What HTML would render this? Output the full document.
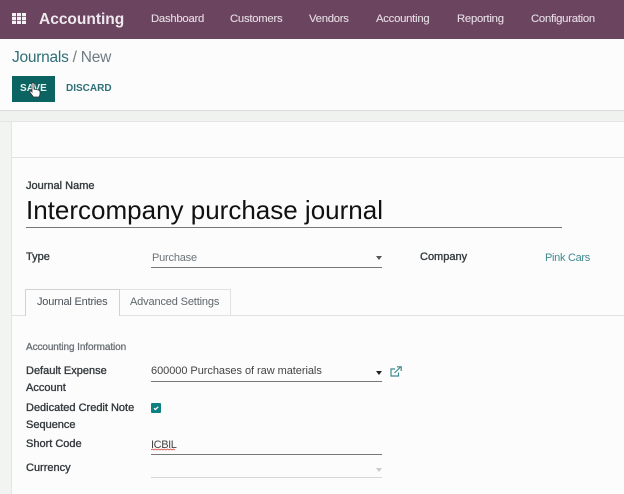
<!DOCTYPE html>
<html><head><meta charset="utf-8"><style>
html,body{margin:0;padding:0}
body{width:624px;height:494px;overflow:hidden;position:relative;background:#fbfcfb;font-family:"Liberation Sans",sans-serif;font-size:12px;color:#4c4c4c}
.a{position:absolute;white-space:nowrap;line-height:14px}
.l{position:absolute}
.b{color:#33393d;font-size:11px;-webkit-text-stroke:.35px #33393d}
.n{color:#e6dce3;font-size:11.3px;letter-spacing:-.25px;top:12px;-webkit-text-stroke:.1px #e6dce3}
.f{color:#444;font-size:11px;letter-spacing:-.05px}
.t{font-size:11px;letter-spacing:-.2px}
</style></head><body>
<div class="l" style="left:0;top:0;width:624px;height:39px;background:#6b4560"></div>
<svg class="l" style="left:12px;top:13px" width="14" height="11" viewBox="0 0 14 11"><g fill="#f5f0f4"><rect x="0" y="0" width="4" height="3.200"/><rect x="5" y="0" width="4" height="3.200"/><rect x="10" y="0" width="4" height="3.200"/><rect x="0" y="3.900" width="4" height="3.200"/><rect x="5" y="3.900" width="4" height="3.200"/><rect x="10" y="3.900" width="4" height="3.200"/><rect x="0" y="7.800" width="4" height="3.200"/><rect x="5" y="7.800" width="4" height="3.200"/><rect x="10" y="7.800" width="4" height="3.200"/></g></svg>
<div class="a" style="left:39px;top:10px;font-size:15.500px;line-height:19px;font-weight:bold;color:#efe9ee">Accounting</div>
<div class="a n" style="left:151px">Dashboard</div>
<div class="a n" style="left:230px">Customers</div>
<div class="a n" style="left:309px">Vendors</div>
<div class="a n" style="left:376px">Accounting</div>
<div class="a n" style="left:457px">Reporting</div>
<div class="a n" style="left:531px">Configuration</div>

<div class="a" style="left:12px;top:48px;font-size:15.500px;letter-spacing:-.25px;line-height:19px;color:#4f6f78"><span style="color:#2f6f78">Journals</span> <span style="color:#6f7c85">/ New</span></div>
<div class="l" style="left:12px;top:76px;width:43px;height:26px;background:#0b6461"></div>
<div class="a" style="left:20px;top:82px;font-size:10px;font-weight:bold;color:#e8f2f1;letter-spacing:.1px">SAVE</div>
<svg class="l" style="left:29px;top:82px" width="12" height="16" viewBox="0 0 12 16"><path d="M3 1.500c0-1.200 2-1.200 2 0V7l4.200 1c1.300.3 1.800 1 1.800 2.200v2.300L10 15H4.500L1 10.500c-.7-1.100.7-2.100 1.500-1.200l.5.700z" fill="#fff" stroke="#333" stroke-width=".8"/></svg>
<div class="a" style="left:66px;top:82px;font-size:10px;font-weight:bold;color:#2f6f78">DISCARD</div>

<div class="l" style="left:0;top:110px;width:624px;height:12px;background:#f0f2f0;border-top:1px solid #d8dbd9;border-bottom:1px solid #e3e6e4;box-sizing:border-box"></div>
<div class="l" style="left:0;top:122px;width:12px;height:372px;background:#f2f4f2;border-right:1px solid #e3e6e4;box-sizing:border-box"></div>
<div class="l" style="left:12px;top:157px;width:612px;height:1px;background:#e0e3e1"></div>

<div class="a b" style="left:26px;top:179px">Journal Name</div>
<div class="a" style="left:26px;top:193px;font-size:26px;line-height:34px;color:#111">Intercompany purchase journal</div>
<div class="l" style="left:26px;top:227px;width:536px;height:1px;background:#777"></div>

<div class="a b" style="left:26px;top:250px">Type</div>
<div class="a t" style="left:152px;top:251px;color:#6d747a">Purchase</div>
<div class="l" style="left:151px;top:267px;width:231px;height:1px;background:#777"></div>
<div class="l" style="left:376px;top:256px;width:0;height:0;border:3.500px solid transparent;border-top:4px solid #555;border-bottom:0"></div>
<div class="a b" style="left:420px;top:250px">Company</div>
<div class="a t" style="left:545px;top:251px;color:#3f8a90;letter-spacing:-.3px">Pink Cars</div>

<div class="l" style="left:12px;top:315px;width:612px;height:1px;background:#e0e3e1"></div>
<div class="l" style="left:25px;top:289px;width:95px;height:27px;background:#fbfcfb;border:1px solid #d0d3d1;border-bottom:0;box-sizing:border-box"></div>
<div class="l" style="left:120px;top:289px;width:111px;height:26px;border:1px solid #e0e3e1;border-left:0;border-bottom:0;box-sizing:border-box"></div>
<div class="a t" style="left:37px;top:295px;color:#4a5157">Journal Entries</div>
<div class="a t" style="left:130px;top:295px;color:#5f666c;letter-spacing:-.15px">Advanced Settings</div>

<div class="a" style="left:26px;top:341px;font-size:10px;letter-spacing:-.1px;color:#6a7075;-webkit-text-stroke:.3px #6a7075">Accounting Information</div>
<div class="a b" style="left:26px;top:363px;line-height:17px">Default Expense<br>Account</div>
<div class="a f" style="left:151px;top:364px">600000 Purchases of raw materials</div>
<div class="l" style="left:151px;top:381px;width:231px;height:1px;background:#777"></div>
<div class="l" style="left:376px;top:371px;width:0;height:0;border:3.500px solid transparent;border-top:4px solid #222;border-bottom:0"></div>
<svg class="l" style="left:390px;top:366px" width="12" height="11" viewBox="0 0 12 11" fill="none" stroke="#3f8a90" stroke-width="1.200"><path d="M8.500 6.500V10H1V3h4"/><path d="M4.500 7 10.500 1"/><path d="M7 .8h4.200V5"/></svg>
<div class="a b" style="left:26px;top:400px;line-height:17px">Dedicated Credit Note<br>Sequence</div>
<div class="l" style="left:151px;top:403px;width:10px;height:10px;background:#0e7f82;border-radius:1px"></div>
<svg class="l" style="left:151px;top:403px" width="10" height="10" viewBox="0 0 10 10"><path d="M3 5.200 4.500 6.500 7.200 3.800" fill="none" stroke="#fff" stroke-width="1.300"/></svg>
<div class="a b" style="left:26px;top:437px">Short Code</div>
<div class="a f" style="left:151px;top:438px;letter-spacing:-.4px">ICBIL</div>
<svg class="l" style="left:151px;top:448px" width="25" height="3" viewBox="0 0 25 3"><path d="M0 2 1.500 1 3 2 4.500 1 6 2 7.500 1 9 2 10.500 1 12 2 13.500 1 15 2 16.500 1 18 2 19.500 1 21 2 22.500 1 24 2" fill="none" stroke="#d8544f" stroke-width=".8"/></svg>
<div class="l" style="left:151px;top:454px;width:231px;height:1px;background:#777"></div>
<div class="a b" style="left:26px;top:461px">Currency</div>
<div class="l" style="left:376px;top:468px;width:0;height:0;border:3.500px solid transparent;border-top:4px solid #c8cbc9;border-bottom:0"></div>
<div class="l" style="left:151px;top:477px;width:231px;height:1px;background:#d5d8d6"></div>
</body></html>
